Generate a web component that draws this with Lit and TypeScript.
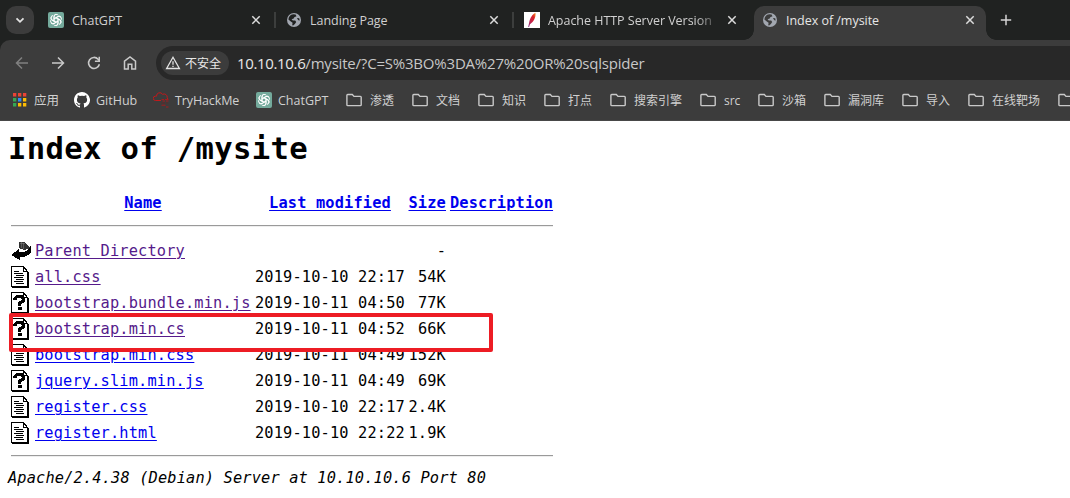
import { LitElement, html, svg, css, nothing } from "lit";
import { customElement, property } from "lit/decorators.js";
import { classMap } from "lit/directives/class-map.js";
import { styleMap } from "lit/directives/style-map.js";

const knot = svg`
  <rect width="16" height="16" rx="2" fill="#74aa9c"/>
  <g fill="none" stroke="#fff" stroke-width=".95">
    ${[0, 60, 120, 180, 240, 300].map(
      (a) => svg`<path transform="rotate(${a} 8 8)" d="M6 9.2V4.9A2.5 2.5 0 0 1 10.4 3.3M6 6.9 9.9 4.6A2.4 2.4 0 0 1 13 5.2"/>`
    )}
  </g>`;

const globe = svg`
  <circle cx="8" cy="8" r="7" fill="#a2a7b0"/>
  <path fill="var(--hole, #202221)" d="M7.2 2.3 9.6 2.6 10.5 4.2 8.3 5.2 7.7 6.6 5.6 7.3 6.8 8.4 9.2 8.5 10.2 10.1 8.9 12 7.1 13.4 6.2 13.2 6.6 10.8 4.8 9.5 2.4 7.6A5.7 5.7 0 0 1 7.2 2.3ZM10.9 5.9 13.2 6.2 13.7 8.5 12.3 8.3Z"/>`;

const icons: Record<string, unknown> = {
  knot,
  globe,
  feather: svg`
    <defs><linearGradient id="f" x1="1" y1="0" x2="0" y2="1">
      <stop offset="0" stop-color="#f59b23"/><stop offset=".3" stop-color="#d9222a"/>
      <stop offset=".65" stop-color="#c0234d"/><stop offset="1" stop-color="#7b2a86"/></linearGradient></defs>
    <rect width="16" height="16" fill="#fff"/>
    <path fill="url(#f)" d="M11.4 .8C8.500 2.200 6 6.300 5.200 10.300L4.200 15 5 15 6 12.200C9.200 10.500 12.300 5.200 11.400 .8Z"/>`,
  close: svg`<path d="M4.300 4.300 11.700 11.700M11.700 4.300 4.300 11.700" stroke="#dcdcdc" stroke-width="1.500"/>`,
  plus: svg`<path d="M8 2.800V13.200M2.800 8H13.200" stroke="#d4d4d4" stroke-width="1.500"/>`,
  chevron: svg`<path d="M4.500 6.300 8 9.800 11.500 6.300" fill="none" stroke="#e3e3e3" stroke-width="1.800"/>`,
  back: svg`<path d="M14 8H3M8 2.500 2.500 8 8 13.500" fill="none" stroke="#808080" stroke-width="1.500"/>`,
  forward: svg`<path d="M2 8H13M8 2.500 13.500 8 8 13.500" fill="none" stroke="#c9c9c9" stroke-width="1.500"/>`,
  reload: svg`<path d="M13.400 9.200A5.500 5.500 0 1 1 12.100 4.200L13.200 5.400" fill="none" stroke="#c9c9c9" stroke-width="1.600"/><path d="M14 1.800V6.900H8.900V5.500H12.500V1.800Z" fill="#c9c9c9"/>`,
  home: svg`<path d="M2.500 6.200 8 2 13.500 6.200V14H9.800V9.300H6.200V14H2.500Z" fill="none" stroke="#c9c9c9" stroke-width="1.500"/>`,
  warn: svg`<path d="M8 2.300 14.400 13.500H1.600Z" fill="none" stroke="#e3e3e3" stroke-width="1.300"/><path d="M8 6.300V9.800M8 10.700V12" stroke="#e3e3e3" stroke-width="1.300"/>`,
  apps: svg`${["#ea4335", "#ea4335", "#ea4335", "#34a853", "#2f8bf5", "#fbbc04", "#34a853", "#fbbc04", "#fbbc04"].map(
    (c, i) => svg`<rect x=${1 + (i % 3) * 5} y=${1 + Math.floor(i / 3) * 5} width="3.300" height="3.500" fill=${c}/>`
  )}`,
  github: svg`<path fill="#fff" d="M8 0C3.580 0 0 3.580 0 8c0 3.540 2.290 6.530 5.470 7.590.4.070.55-.17.55-.38v-1.490C4 14.090 3.480 13.220 3.320 12.770c-.09-.23-.48-.94-.82-1.130-.28-.15-.68-.52-.01-.53.630-.01 1.080.58 1.230.82.72 1.210 1.870.87 2.330.66.070-.52.28-.87.51-1.070-1.780-.2-3.640-.89-3.640-3.950 0-.87.31-1.590.82-2.150-.08-.2-.36-1.020.080-2.120 0 0 .67-.21 2.200.82a7.600 7.600 0 0 1 4 0c1.530-1.040 2.200-.82 2.200-.82.44 1.100.16 1.920.080 2.120.51.56.82 1.270.82 2.150 0 3.070-1.870 3.750-3.650 3.950.29.25.54.73.54 1.480v2.200c0 .21.150.46.55.38A8 8 0 0 0 8 0Z"/>`,
  cloud: svg`<path fill="none" stroke="#c01a1c" d="M8 8.500H2.500A2 2 0 0 1 2.300 4.200H3.500A3.300 3.300 0 0 1 9.600 2.300 3.200 3.200 0 0 1 14.200 5.500L14.800 7"/>
    <path d="M8.500 7.500H11M12 7.500H15.500M9.500 9H12M13 9H15.500" stroke="#a51b1d"/>
    <path d="M8 11H12M13 11H15" stroke="#5a2a2b"/>
    <path d="M8.500 13.200H12.500M13 15H15.500" stroke="#a51b1d"/>`,
  folder: svg`<path d="M1.700 2.500H6.300L8 4.400H14.400Q15.200 4.400 15.200 5.200V12.800Q15.200 13.600 14.400 13.600H1.700Q.9 13.600.9 12.800V3.300Q.9 2.500 1.700 2.500Z" fill="none" stroke="#c9c9c9" stroke-width="1.400"/>`,
};

@customElement("ui-icon")
export class UiIcon extends LitElement {
  @property() name = "";
  static styles = css`
    :host { display: block; flex: none; width: 16px; height: 16px; }
    svg { display: block; width: 100%; height: 100%; }
  `;
  render() {
    return html`<svg viewBox="0 0 16 16">${icons[this.name]}</svg>`;
  }
}

const sheet = svg`
  <path fill="#fff" stroke="#000" d="M.5.5H12.500L16.500 5.500V20.500H.5Z"/>
  <path fill="none" stroke="#000" d="M12.500.5V5.500H17"/>
  <path fill="none" stroke="#000" d="M1 21H17.500V6"/>`;

const fileIcons: Record<string, unknown> = {
  text: svg`${sheet}<path stroke="#000" d="M3 5.500H8M3 7.500H12M5 9.500H13M3 11.500H12M5 13.500H13M3 15.500H12M5 17.500H13"/>`,
  unknown: svg`${sheet}<path fill="none" stroke="#000" stroke-width="3.300" d="M4 8V6.500L6 4.500H10.500L12.500 6.500V8.500L8.500 11.500V13.500"/><rect x="7" y="15" width="4" height="3"/>`,
  up: svg`<path fill="#333" d="M8 2H13L17 5 19 8 13 10 8 8Z"/>
    <path d="M10 2V8M12 3V9M9 3.500H14" stroke="#888" stroke-width=".5"/>
    <path d="M20 5V12L17 15 13 17H9V20L0 15 8 9V12L14 11.500 18 9Z"/>`,
};

@customElement("file-icon")
export class FileIcon extends LitElement {
  @property() name = "";
  static styles = css`
    :host, svg { display: block; width: 20px; height: 22px; }
  `;
  render() {
    return html`<svg viewBox="0 0 20 22" shape-rendering="crispEdges">${fileIcons[this.name]}</svg>`;
  }
}

interface Tab { icon: string; title: string; active?: boolean; faded?: boolean; }
const tabs: Tab[] = [
  { icon: "knot", title: "ChatGPT" },
  { icon: "globe", title: "Landing Page" },
  { icon: "feather", title: "Apache HTTP Server Version", faded: true },
  { icon: "globe", title: "Index of /mysite", active: true },
];

interface Bookmark { icon: string; label: string; width: number; }
const bookmarks: Bookmark[] = [
  { icon: "apps", label: "应用", width: 62 },
  { icon: "github", label: "GitHub", width: 79 },
  { icon: "cloud", label: "TryHackMe", width: 103 },
  { icon: "knot", label: "ChatGPT", width: 90 },
  { icon: "folder", label: "渗透", width: 66 },
  { icon: "folder", label: "文档", width: 66 },
  { icon: "folder", label: "知识", width: 66 },
  { icon: "folder", label: "打点", width: 66 },
  { icon: "folder", label: "搜索引擎", width: 90 },
  { icon: "folder", label: "src", width: 58 },
  { icon: "folder", label: "沙箱", width: 66 },
  { icon: "folder", label: "漏洞库", width: 78 },
  { icon: "folder", label: "导入", width: 66 },
  { icon: "folder", label: "在线靶场", width: 90 },
  { icon: "folder", label: "", width: 66 },
];

interface Entry { icon: string; name: string; date: string; size: string; visited?: boolean; }
const entries: Entry[] = [
  { icon: "up", name: "Parent Directory", date: "", size: "-", visited: true },
  { icon: "text", name: "all.css", date: "2019-10-10 22:17", size: "54K", visited: true },
  { icon: "unknown", name: "bootstrap.bundle.min.js", date: "2019-10-11 04:50", size: "77K", visited: true },
  { icon: "unknown", name: "bootstrap.min.cs", date: "2019-10-11 04:52", size: "66K", visited: true },
  { icon: "text", name: "bootstrap.min.css", date: "2019-10-11 04:49", size: "152K" },
  { icon: "unknown", name: "jquery.slim.min.js", date: "2019-10-11 04:49", size: "69K" },
  { icon: "text", name: "register.css", date: "2019-10-10 22:17", size: "2.4K" },
  { icon: "text", name: "register.html", date: "2019-10-10 22:22", size: "1.9K" },
];

@customElement("browser-chrome")
export class BrowserChrome extends LitElement {
  static styles = css`
    :host { display: block; background: #202221; color: #d0d0d0;
      font: 12.5px/16px "Open Sans", "Noto Sans CJK SC", sans-serif; white-space: nowrap; }
    .strip { display: flex; height: 40px; padding-left: 6px; box-sizing: border-box; align-items: center; }
    .search { width: 28px; height: 28px; border-radius: 10px; background: #3c3c3c; display: grid; place-items: center; margin-right: 4px; }
    .tab { width: 238px; height: 34px; margin-top: 6px; padding: 0 12px 6px 10px; box-sizing: border-box;
      display: flex; align-items: center; gap: 8px; position: relative; }
    .tab.line::after { content: ""; position: absolute; right: 0; top: 6px; width: 2px; height: 16px; background: #3c3e3d; }
    .tab.active { width: 232px; margin-left: 2px; padding: 0 8px 6px 8px; background: #3c3c3c; border-radius: 10px 10px 0 0; color: #e6e6e6; --hole: #3c3c3c; }
    .tab.active::before, .tab.active::after { content: ""; position: absolute; bottom: 0; width: 10px; height: 10px; }
    .tab.active::before { left: -10px; background: radial-gradient(circle at 0 0, transparent 9.5px, #3c3c3c 10px); }
    .tab.active::after { right: -10px; background: radial-gradient(circle at 100% 0, transparent 9.5px, #3c3c3c 10px); }
    .title { flex: 1; overflow: hidden; letter-spacing: -0.03px; padding-top: 2px; }
    .faded .title { -webkit-mask-image: linear-gradient(90deg, #000 148px, #0004 166px); mask-image: linear-gradient(90deg, #000 148px, #0004 166px); }
    .new { margin-left: 12px; }
    .tools { background: #3c3c3c; border-radius: 10px 0 0 0; height: 80px; border-bottom: 1px solid #484848; overflow: hidden; }
    .nav { display: flex; align-items: center; padding: 6px 0 0 14px; gap: 20px; }
    .omni { flex: 1; height: 34px; margin-left: -2px; padding-left: 5px; background: #282828; border-radius: 17px 0 0 17px; display: flex; align-items: center; }
    .chip { width: 68px; height: 24px; box-sizing: border-box; border-radius: 12px; background: #3c3c3c; color: #e8e8e8; display: flex; align-items: center; gap: 4px; padding-left: 4px; margin-right: 8px; font-size: 12px; }
    .chip span { padding-top: 2px; }
    .url { font-size: 15px; line-height: 20px; letter-spacing: -0.2px; color: #c7c7c7; }
    .host { color: #e8e8e8; letter-spacing: -0.35px; }
    .marks { display: flex; height: 40px; align-items: center; padding-left: 12px; overflow: hidden; }
    .mark { display: flex; flex: none; gap: 8px; align-items: center; font-size: 12px; }
    .mark span { padding-top: 2px; }
    .mark.brand { gap: 6px; font-size: 12.5px; }
    .mark.tight span { letter-spacing: -0.12px; }
  `;
  render() {
    return html`
      <div class="strip">
        <div class="search"><ui-icon name="chevron"></ui-icon></div>
        ${tabs.map((t, i) => html`
          <div class=${classMap({ tab: true, active: !!t.active, faded: !!t.faded, line: i < 2 })}>
            <ui-icon name=${t.icon}></ui-icon>
            <span class="title">${t.title}</span>
            <ui-icon name="close"></ui-icon>
          </div>`)}
        <ui-icon class="new" name="plus"></ui-icon>
      </div>
      <div class="tools">
        <div class="nav">
          ${["back", "forward", "reload", "home"].map((n) => html`<ui-icon name=${n}></ui-icon>`)}
          <div class="omni">
            <div class="chip"><ui-icon name="warn"></ui-icon><span>不安全</span></div>
            <span class="url"><span class="host">10.10.10.6</span>/mysite/?C=S%3BO%3DA%27%20OR%20sqlspider</span>
          </div>
        </div>
        <div class="marks">
          ${bookmarks.map((b) => html`
            <div class=${classMap({ mark: true, brand: /^(github|cloud|knot|apps)$/.test(b.icon), tight: b.icon === "cloud" })} style=${styleMap({ width: `${b.width}px` })}>
              <ui-icon name=${b.icon}></ui-icon>${b.label ? html`<span>${b.label}</span>` : nothing}
            </div>`)}
        </div>
      </div>`;
  }
}

@customElement("directory-index")
export class DirectoryIndex extends LitElement {
  static styles = css`
    :host { display: block; position: relative; background: #fff; color: #000; height: 377px; overflow: hidden; box-sizing: border-box; padding: 9px 8px 0;
      font: 15.3px/26px "DejaVu Sans Mono", monospace; letter-spacing: 0.164px; white-space: nowrap; }
    h1 { margin: 0; font-size: 30.6px; line-height: 38px; letter-spacing: 0.328px; }
    .list { width: 542px; margin: 22px 0 0 3px; }
    .row { display: grid; height: 26px; grid-template-columns: 20px 216px 150px 37px 103px; column-gap: 4px; align-items: center; }
    .head { font-weight: bold; justify-items: center; }
    .size { justify-self: end; }
    a { color: #0000ee; text-decoration: underline; text-underline-offset: 2px; text-decoration-thickness: 1px; }
    a.visited { color: #551a8b; }
    hr { margin: 9px 0 11px; border: 0; border-top: 1px solid #9a9a9a; border-bottom: 1px solid #eee; height: 0; }
    hr.end { margin: 9px 0 8px; }
    file-icon { margin-top: -1px; }
    address { font-style: italic; }
    .marker { position: absolute; left: 9px; top: 192px; width: 484px; height: 39px; box-sizing: border-box; border: 4px solid #ed1c24; border-radius: 2px; }
  `;
  render() {
    return html`
      <h1>Index of /mysite</h1>
      <div class="list">
        <div class="row head"><span></span><a>Name</a><a>Last modified</a><a class="size">Size</a><a>Description</a></div>
        <hr />
        ${entries.map((e) => html`
          <div class="row">
            <file-icon name=${e.icon}></file-icon>
            <span><a class=${classMap({ visited: !!e.visited })}>${e.name}</a></span>
            <span>${e.date}</span>
            <span class="size">${e.size}</span>
          </div>`)}
        <hr class="end" />
      </div>
      <address>Apache/2.4.38 (Debian) Server at 10.10.10.6 Port 80</address>
      <div class="marker"></div>`;
  }
}

@customElement("app-root")
export class AppRoot extends LitElement {
  static styles = css`
    :host { display: block; width: 1070px; height: 498px; overflow: hidden; background: #fff; }
  `;
  render() {
    return html`<browser-chrome></browser-chrome><directory-index></directory-index>`;
  }
}
